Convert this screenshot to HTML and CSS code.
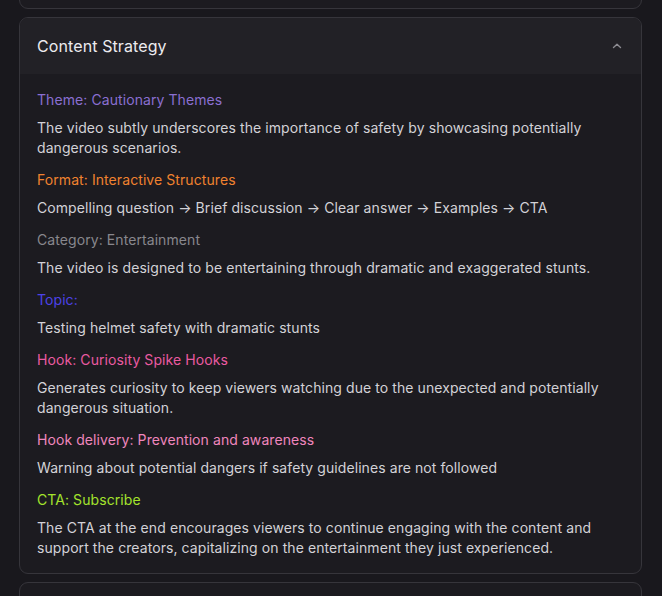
FILE: index.html
```html
<!DOCTYPE html>
<html lang="en">
<head>
  <meta charset="UTF-8">
  <meta name="viewport" content="width=device-width, initial-scale=1.0">
  <title>Content Strategy</title>
  <link rel="stylesheet" href="styles.css">
</head>
<body>
  <div class="stack">
    <section class="card card-prev"></section>

    <section class="card">
      <div class="card-head">
        <h2>Content Strategy</h2>
        <svg class="chev" width="12" height="12" viewBox="0 0 12 12" fill="none" stroke="currentColor" stroke-width="1.4" stroke-linecap="round" stroke-linejoin="round"><path d="M2.5 7.5 6 4.3 9.5 7.5"/></svg>
      </div>
      <div class="card-body">
        <div class="item">
          <div class="label theme">Theme: Cautionary Themes</div>
          <p>The video subtly underscores the importance of safety by showcasing potentially dangerous scenarios.</p>
        </div>
        <div class="item">
          <div class="label format">Format: Interactive Structures</div>
          <p>Compelling question → Brief discussion → Clear answer → Examples → CTA</p>
        </div>
        <div class="item">
          <div class="label category">Category: Entertainment</div>
          <p>The video is designed to be entertaining through dramatic and exaggerated stunts.</p>
        </div>
        <div class="item">
          <div class="label topic">Topic:</div>
          <p>Testing helmet safety with dramatic stunts</p>
        </div>
        <div class="item">
          <div class="label hook">Hook: Curiosity Spike Hooks</div>
          <p>Generates curiosity to keep viewers watching due to the unexpected and potentially dangerous situation.</p>
        </div>
        <div class="item">
          <div class="label delivery">Hook delivery: Prevention and awareness</div>
          <p>Warning about potential dangers if safety guidelines are not followed</p>
        </div>
        <div class="item">
          <div class="label cta">CTA: Subscribe</div>
          <p>The CTA at the end encourages viewers to continue engaging with the content and support the creators, capitalizing on the entertainment they just experienced.</p>
        </div>
      </div>
    </section>

    <section class="card card-next"></section>
  </div>
</body>
</html>
```

FILE: styles.css
```css
body {
  margin: 0;
  background: #19181d;
  font-family: Inter, "Noto Sans", sans-serif;
  color: #d6d5da;
  overflow: hidden;
  height: 596px;
}
.stack {
  display: flex;
  flex-direction: column;
  gap: 8px;
  margin: -40px 20px 0 19px;
}
.card {
  background: #1c1b20;
  border: 1px solid #36353b;
  border-radius: 9px;
  overflow: hidden;
}
.card-prev {
  height: 47px;
}
.card-next {
  height: 40px;
}
.card-head {
  display: flex;
  align-items: center;
  justify-content: space-between;
  height: 56px;
  padding: 0 18px 0 17px;
  background: #222126;
}
.card-head h2 {
  margin: 0;
  font-size: 16px;
  font-weight: 400;
  letter-spacing: 0.1px;
  color: #ecebef;
}
.chev {
  color: #8c8b91;
}
.card-body {
  padding: 16px 17px 15px;
  display: flex;
  flex-direction: column;
  gap: 12px;
  letter-spacing: 0.08px;
}
.label {
  font-size: 14px;
  line-height: 20px;
  margin-bottom: 8px;
}
.item p {
  margin: 0;
  font-size: 14px;
  line-height: 20px;
  color: #d3d2d7;
}
.theme { color: #8a6fd1; }
.format { color: #f0822f; }
.category { color: #88878d; }
.topic { color: #4c42e6; }
.hook { color: #ea5aa0; }
.delivery { color: #ef86bd; }
.cta { color: #a4e32c; }
```
